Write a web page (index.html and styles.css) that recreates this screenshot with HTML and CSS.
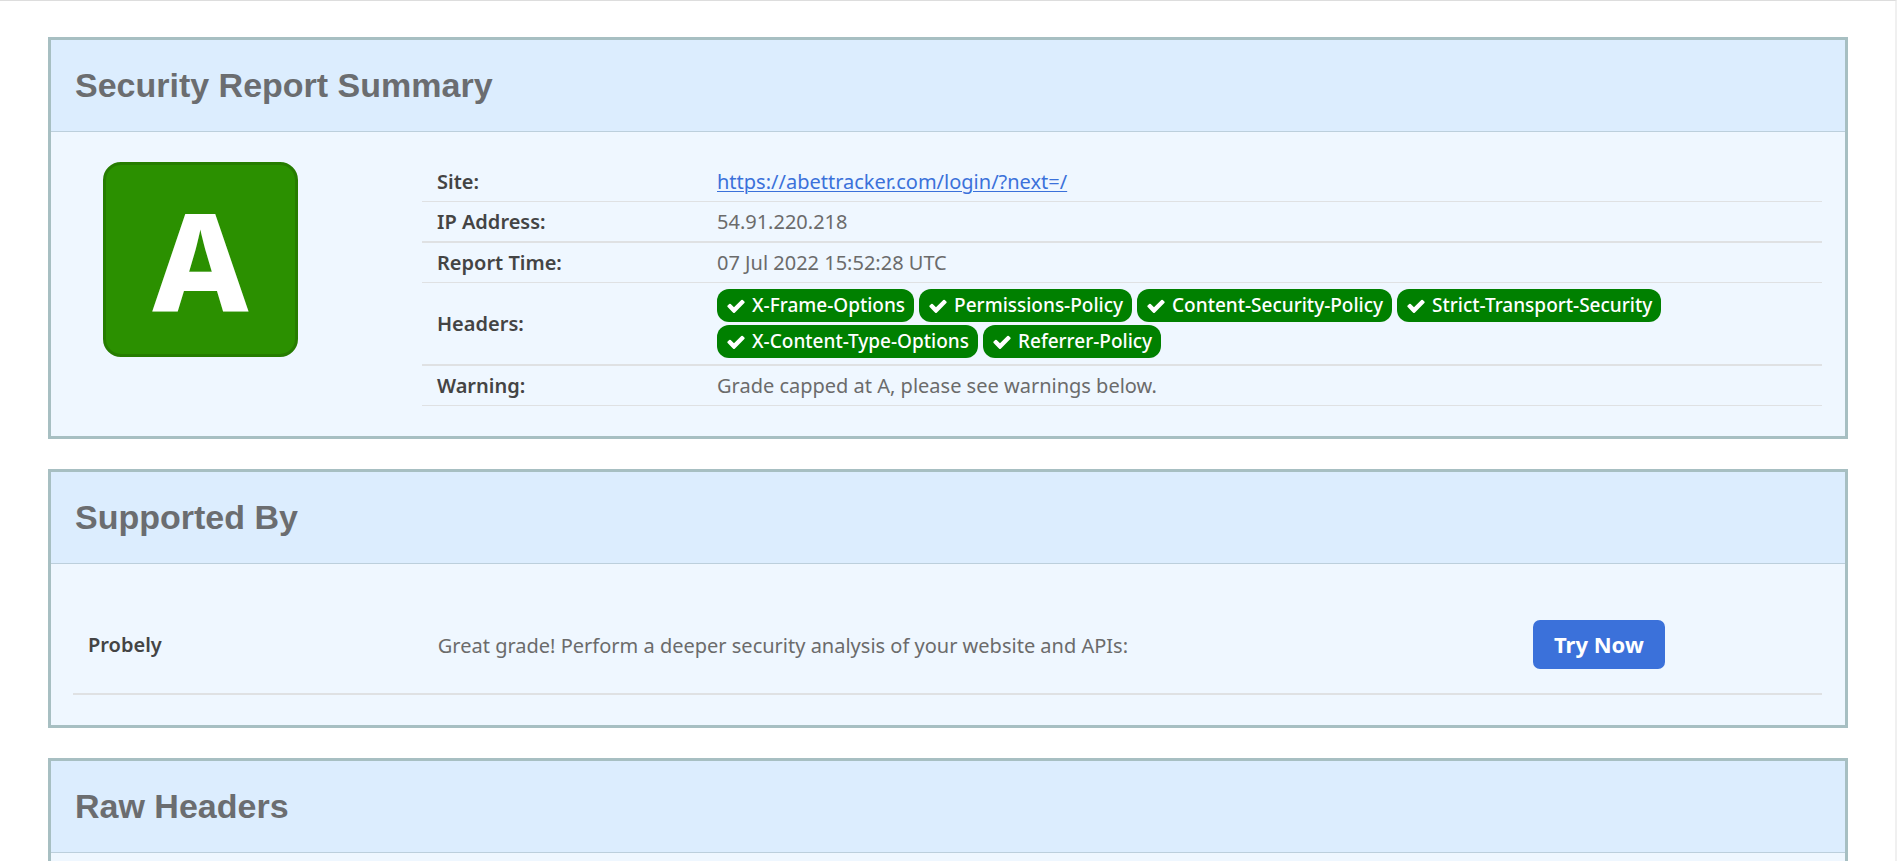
FILE: index.html
```
<!DOCTYPE html>
<html lang="en">
<head>
<meta charset="utf-8">
<title>Security Report</title>
<link rel="stylesheet" href="styles.css">
</head>
<body>
<svg class="sprite" aria-hidden="true">
  <symbol id="check" viewBox="0 0 1792 1792">
    <path d="M1671 566q0 40-28 68l-724 724-136 136q-28 28-68 28t-68-28l-136-136-362-362q-28-28-28-68t28-68l136-136q28-28 68-28t68 28l294 295 656-657q28-28 68-28t68 28l136 136q28 28 28 68z"/>
  </symbol>
</svg>
<main class="page">
  <section class="card">
    <h2 class="card-title">Security Report Summary</h2>
    <div class="card-body summary">
      <div class="grade-cell"><div class="grade">A</div></div>
      <table class="report">
        <tr><th scope="row">Site:</th><td><a href="https://abettracker.com/login/?next=/">https://abettracker.com/login/?next=/</a></td></tr>
        <tr><th scope="row">IP Address:</th><td>54.91.220.218</td></tr>
        <tr><th scope="row">Report Time:</th><td>07 Jul 2022 15:52:28 UTC</td></tr>
        <tr>
          <th scope="row">Headers:</th>
          <td>
            <ul class="badges">
              <li class="badge"><svg class="check"><use href="#check"/></svg>X-Frame-Options</li>
              <li class="badge"><svg class="check"><use href="#check"/></svg>Permissions-Policy</li>
              <li class="badge"><svg class="check"><use href="#check"/></svg>Content-Security-Policy</li>
              <li class="badge"><svg class="check"><use href="#check"/></svg>Strict-Transport-Security</li>
              <li class="badge"><svg class="check"><use href="#check"/></svg>X-Content-Type-Options</li>
              <li class="badge"><svg class="check"><use href="#check"/></svg>Referrer-Policy</li>
            </ul>
          </td>
        </tr>
        <tr><th scope="row">Warning:</th><td>Grade capped at A, please see warnings below.</td></tr>
      </table>
    </div>
  </section>

  <section class="card">
    <h2 class="card-title">Supported By</h2>
    <div class="card-body">
      <div class="sponsor">
        <strong class="sponsor-name">Probely</strong>
        <p class="sponsor-text">Great grade! Perform a deeper security analysis of your website and APIs:</p>
        <div class="sponsor-action"><button class="try" type="button">Try Now</button></div>
      </div>
    </div>
  </section>

  <section class="card card-last">
    <h2 class="card-title">Raw Headers</h2>
  </section>
</main>
</body>
</html>
```
FILE: styles.css
```
* {
  box-sizing: border-box;
}

body {
  margin: 0;
  background: #fff;
  color: #6b6b6b;
  font-family: "Noto Sans", "Open Sans", sans-serif;
  font-size: 20px;
  line-height: 27px;
}

.sprite {
  display: none;
}

.page {
  display: flex;
  flex-direction: column;
  gap: 30px;
  min-height: 100vh;
  padding: 36px 47px 0 48px;
  border-top: 1px solid #ddd;
  border-right: 2px solid #f0f0f0;
}

.card {
  border: 3px solid #a7bfc2;
  background: #eff7ff;
}

.card-last {
  flex: 1;
  border-bottom: 0;
}

.card-title {
  margin: 0;
  padding: 24px 24px 25px;
  border-bottom: 1px solid #bccfdc;
  background: #dcedfe;
  color: #6b6d70;
  font-family: "Liberation Sans", Arial, sans-serif;
  font-size: 34px;
  font-weight: 700;
  line-height: 42px;
}

.card-body {
  padding: 30px 23px 30px 22px;
}

.summary {
  display: grid;
  grid-template-columns: 1fr 4fr;
  padding-left: 21px;
}

.grade-cell {
  padding-left: 31px;
}

.grade {
  display: flex;
  align-items: center;
  justify-content: center;
  width: 195px;
  height: 195px;
  border: 3px solid #267c00;
  border-radius: 18px;
  background: #2b9000;
  color: #fff;
  font-size: 136px;
  font-weight: 800;
  line-height: 187px;
}

.report {
  width: 100%;
  border-collapse: separate;
  border-spacing: 0;
  table-layout: fixed;
}

.report th,
.report td {
  padding: 6px 15px;
  border-bottom: 1px solid #dfe1e3;
  text-align: left;
  vertical-align: middle;
}

.report tr:nth-child(even) th,
.report tr:nth-child(even) td {
  border-bottom-width: 2px;
}

.report th {
  width: 20%;
  color: #444;
  font-weight: 600;
}

.report a {
  color: #3b71da;
  text-underline-offset: 2px;
  text-decoration-thickness: 1px;
}

.badges {
  display: flex;
  flex-wrap: wrap;
  gap: 3px 5px;
  margin: 0;
  padding: 0;
  list-style: none;
}

.badge {
  display: flex;
  align-items: center;
  gap: 6px;
  padding: 0 9px;
  border-radius: 12px;
  background: #008000;
  color: #fff;
  font-size: 19px;
  font-weight: 500;
  line-height: 33px;
}

.check {
  width: 20px;
  height: 20px;
  fill: #fff;
}

.sponsor {
  display: flex;
  align-items: center;
  padding: 26px 0 24px;
  border-bottom: 2px solid #dfe1e3;
}

.sponsor-name {
  width: 20%;
  padding-left: 15px;
  color: #444;
  font-weight: 600;
}

.sponsor-text {
  flex: 1;
  margin: 0;
  padding: 2px 15px 0;
}

.sponsor-action {
  width: 289px;
}

.try {
  display: block;
  height: 49px;
  padding: 0 21px;
  border: 0;
  border-radius: 7px;
  background: #3b71da;
  color: #fff;
  font-family: inherit;
  font-size: 22px;
  font-weight: 700;
  line-height: 49px;
}
```
